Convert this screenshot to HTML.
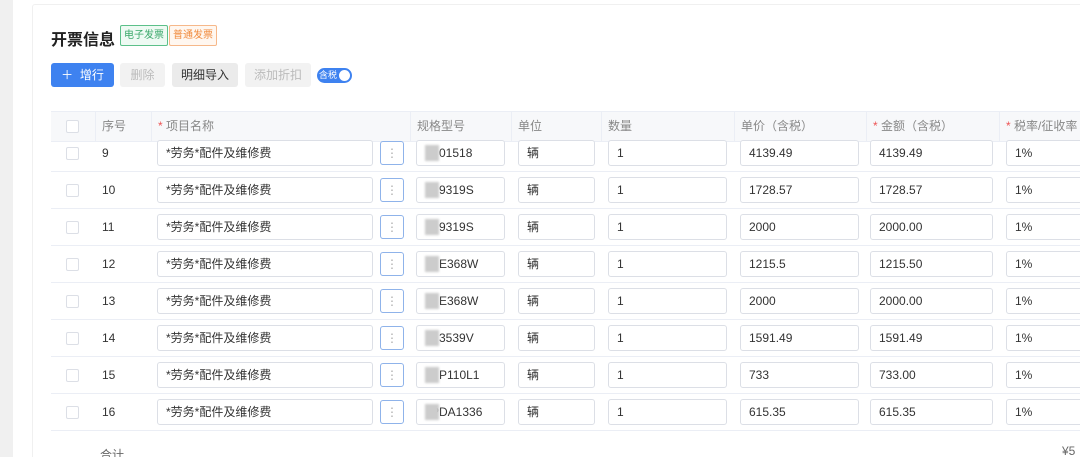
<!DOCTYPE html>
<html><head><meta charset="utf-8"><style>
*{margin:0;padding:0;box-sizing:border-box}
html,body{width:1080px;height:457px;overflow:hidden}
body{background:#fff;font-family:"Liberation Sans","Noto Sans CJK SC",sans-serif;font-size:12px;color:#333;position:relative}
.abs{position:absolute}
.lg{left:0;top:0;width:13px;height:457px;background:#f0f0f0}
.card{left:32px;top:4px;width:1060px;height:470px;border:1px solid #f0f0f0;border-radius:3px}
.title{left:51px;top:26px;font-size:16px;font-weight:bold;color:#222}
.tag{top:25px;height:21px;font-size:10px;line-height:19px;padding:0 3px;border:1px solid;border-radius:2px}
.btn{top:63px;height:24px;line-height:24px;text-align:center;border-radius:3px;font-size:12px}
.th{top:111px;height:31px;background:#f7f8fa;border-top:1px solid #ebeef5;border-bottom:1px solid #ebeef5}
.hc{top:111px;height:31px;line-height:31px;color:#888;font-size:12px;border-left:1px solid #ebeef5;padding-left:6px}
.red{color:#e55}
.inp{height:26px;border:1px solid #dcdfe6;border-radius:3px;line-height:24px;padding-left:8px;background:#fff}
.cb{width:13px;height:13px;border:1px solid #dcdfe6;border-radius:2px;background:#fff}
.line{left:51px;width:1029px;height:1px;background:#ebeef5}
.dots{width:24px;height:24px;border:1px solid #8fb3ea;border-radius:3px;text-align:center;color:#aaa;line-height:22px}
.blur{background:#ccc;width:14px;height:16px;filter:blur(1px)}
</style></head><body>
<div class="abs lg"></div>
<div class="abs card"></div>
<div class="abs title">开票信息</div>
<div class="abs tag" style="left:120px;color:#3aa86a;border-color:#5cc08a;background:#eefaf3">电子发票</div>
<div class="abs tag" style="left:169px;color:#f08a3c;border-color:#f6b88a;background:#fff7f0">普通发票</div>
<div class="abs btn" style="left:51px;width:63px;background:#3e82f0;color:#fff">＋&nbsp; 增行</div>
<div class="abs btn" style="left:120px;width:45px;background:#f2f2f2;color:#bbb">删除</div>
<div class="abs btn" style="left:172px;width:66px;background:#ebebeb;color:#333">明细导入</div>
<div class="abs btn" style="left:245px;width:66px;background:#f2f2f2;color:#bbb">添加折扣</div>
<div class="abs" style="left:317px;top:68px;width:35px;height:15px;border-radius:8px;background:#3e82f0;color:#fff;font-size:9px;line-height:15px;padding-left:2px">含税<span style="position:absolute;right:2px;top:2px;width:11px;height:11px;border-radius:50%;background:#fff"></span></div>
<div class="abs th" style="left:51px;width:1029px"></div>
<div class="abs cb" style="left:66px;top:120px"></div>
<div class="abs hc" style="left:95px">序号</div>
<div class="abs hc" style="left:151px"><span class="red">*</span> 项目名称</div>
<div class="abs hc" style="left:410px">规格型号</div>
<div class="abs hc" style="left:511px">单位</div>
<div class="abs hc" style="left:601px">数量</div>
<div class="abs hc" style="left:734px">单价（含税）</div>
<div class="abs hc" style="left:866px"><span class="red">*</span> 金额（含税）</div>
<div class="abs hc" style="left:999px"><span class="red">*</span> 税率/征收率</div>
<div id="rows"></div>
<script>
var d=[["9","01518","4139.49","4139.49"],["10","9319S","1728.57","1728.57"],["11","9319S","2000","2000.00"],["12","E368W","1215.5","1215.50"],["13","E368W","2000","2000.00"],["14","3539V","1591.49","1591.49"],["15","P110L1","733","733.00"],["16","PDA1336","615.35","615.35"]];
var h="";
d.forEach(function(r,i){var t=140+i*37;var c=t+13;
h+='<div class="abs cb" style="left:66px;top:'+(c-6)+'px"></div>';
h+='<div class="abs" style="left:102px;top:'+(c-7)+'px">'+r[0]+'</div>';
h+='<div class="abs inp" style="left:157px;top:'+t+'px;width:216px">*劳务*配件及维修费</div>';
h+='<div class="abs dots" style="left:380px;top:'+(t+1)+'px">⋮</div>';
h+='<div class="abs inp" style="left:416px;top:'+t+'px;width:89px;padding-left:'+(r[1].length>6?14:22)+'px">'+r[1]+'</div>';
h+='<div class="abs blur" style="left:425px;top:'+(t+5)+'px"></div>';
h+='<div class="abs inp" style="left:518px;top:'+t+'px;width:77px">辆</div>';
h+='<div class="abs inp" style="left:608px;top:'+t+'px;width:119px">1</div>';
h+='<div class="abs inp" style="left:740px;top:'+t+'px;width:119px">'+r[2]+'</div>';
h+='<div class="abs inp" style="left:870px;top:'+t+'px;width:123px">'+r[3]+'</div>';
h+='<div class="abs inp" style="left:1006px;top:'+t+'px;width:90px">1%</div>';
h+='<div class="abs line" style="top:'+(t+31)+'px"></div>';
});
document.getElementById("rows").innerHTML=h;
</script>
<div class="abs" style="left:100px;top:446px;color:#666">合计</div>
<div class="abs" style="left:1062px;top:444px;color:#666">¥5</div>
</body></html>
